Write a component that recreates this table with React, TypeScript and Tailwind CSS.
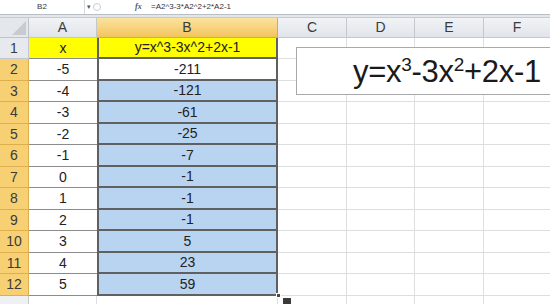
import React from "react";

type Row = { n: number; a: string; b: string; h: string };

const rows: Row[] = [
  { n: 2, a: "-5", b: "-211", h: "h-[22px]" },
  { n: 3, a: "-4", b: "-121", h: "h-[21px]" },
  { n: 4, a: "-3", b: "-61", h: "h-[22px]" },
  { n: 5, a: "-2", b: "-25", h: "h-[21px]" },
  { n: 6, a: "-1", b: "-7", h: "h-[22px]" },
  { n: 7, a: "0", b: "-1", h: "h-[21px]" },
  { n: 8, a: "1", b: "-1", h: "h-[22px]" },
  { n: 9, a: "2", b: "-1", h: "h-[21px]" },
  { n: 10, a: "3", b: "5", h: "h-[22px]" },
  { n: 11, a: "4", b: "23", h: "h-[21px]" },
  { n: 12, a: "5", b: "59", h: "h-[22px]" },
];

const font = { fontFamily: '"Liberation Sans", Arial, sans-serif' };

function EmptyCells() {
  return (
    <>
      <div className="w-[69px] shrink-0 border-r border-b border-[#dcdedf] bg-white" />
      <div className="w-[68px] shrink-0 border-r border-b border-[#dcdedf] bg-white" />
      <div className="w-[69px] shrink-0 border-r border-b border-[#dcdedf] bg-white" />
      <div className="flex-1 border-b border-[#dcdedf] bg-white" />
    </>
  );
}

export default function App() {
  return (
    <div
      className="relative w-[550px] h-[304px] overflow-hidden bg-white text-[#222]"
      style={font}
    >
      {/* formula bar */}
      <div className="flex h-[15px] items-center bg-white border-b border-[#b9bec5] text-[8px] text-[#333]">
        <div className="w-[85px] h-full flex items-center justify-center border-r border-[#d5d9de]">
          B2
        </div>
        <div className="w-[8px] flex items-center justify-center text-[7px] text-[#555]">▾</div>
        <div className="w-[10px] h-full flex items-center">
          <div className="w-[8px] h-[8px] rounded-full border border-[#c9cdd2]" />
        </div>
        <div className="w-[32px]" />
        <div className="w-[16px] italic font-bold text-[8px] text-[#555]" style={{ fontFamily: '"Liberation Serif", serif' }}>
          fx
        </div>
        <div>=A2^3-3*A2^2+2*A2-1</div>
      </div>
      <div className="h-[3px] bg-[#e3e7ec] border-b border-[#c6cbd1]" />

      {/* column headers */}
      <div className="flex h-[20px] text-[14px] text-[#3b3b3b]">
        <div className="relative w-[29px] shrink-0 bg-[#e4e8ed] border-r border-b border-[#bfc4ca] overflow-hidden">
          <div className="absolute right-[2px] bottom-[2px] w-0 h-0 border-l-[14px] border-l-transparent border-b-[14px] border-b-[#c8ccd1]" />
        </div>
        <div className="w-[68px] shrink-0 flex items-center justify-center bg-gradient-to-b from-[#f1f3f6] to-[#e1e5ea] border-r border-b border-[#c3c8ce]">
          A
        </div>
        <div className="w-[181px] shrink-0 flex items-center justify-center bg-gradient-to-b from-[#fbe39e] to-[#f3c45c] border-r border-b border-[#d9a94a]">
          B
        </div>
        <div className="w-[69px] shrink-0 flex items-center justify-center bg-gradient-to-b from-[#f1f3f6] to-[#e1e5ea] border-r border-b border-[#c3c8ce]">
          C
        </div>
        <div className="w-[68px] shrink-0 flex items-center justify-center bg-gradient-to-b from-[#f1f3f6] to-[#e1e5ea] border-r border-b border-[#c3c8ce]">
          D
        </div>
        <div className="w-[69px] shrink-0 flex items-center justify-center bg-gradient-to-b from-[#f1f3f6] to-[#e1e5ea] border-r border-b border-[#c3c8ce]">
          E
        </div>
        <div className="flex-1 flex items-center justify-center bg-gradient-to-b from-[#f1f3f6] to-[#e1e5ea] border-b border-[#c3c8ce]">
          F
        </div>
      </div>

      {/* row 1 */}
      <div className="flex h-[21px] text-[14px]">
        <div className="w-[29px] shrink-0 flex items-center justify-center bg-[#e6e9ee] border-r border-b border-[#c3c8ce] text-[#3b3b3b]">
          1
        </div>
        <div className="w-[68px] shrink-0 flex items-center justify-center bg-[#ffff00] border-b border-[#8c8c8c]">
          x
        </div>
        <div className="w-[181px] shrink-0 flex items-center justify-center bg-[#ffff00] border-l-2 border-r-2 border-b-2 border-[#606060]">
          y=x^3-3x^2+2x-1
        </div>
        <EmptyCells />
      </div>

      {rows.map((r) => (
        <div key={r.n} className={`flex ${r.h} text-[14px]`}>
          <div className="w-[29px] shrink-0 flex items-center justify-center bg-[#f6d072] border-r border-b border-[#dfae4c] text-[#3b3b3b]">
            {r.n}
          </div>
          <div className="w-[68px] shrink-0 flex items-center justify-center bg-white border-b border-[#8c8c8c]">
            {r.a}
          </div>
          <div
            className={
              r.n === 2
                ? "w-[181px] shrink-0 flex items-center justify-center bg-white border-l-2 border-r-2 border-b-2 border-[#606060]"
                : "w-[181px] shrink-0 flex items-center justify-center bg-[#b9d4f1] border-l-2 border-r-2 border-b-2 border-[#606060]"
            }
          >
            {r.b}
          </div>
          <EmptyCells />
        </div>
      ))}

      {/* row 13 (partial) */}
      <div className="flex h-[21px] text-[14px]">
        <div className="w-[29px] shrink-0 flex items-start justify-center pt-[3px] bg-[#eef0f3] border-r border-b border-[#c3c8ce] text-[#3b3b3b]">
          13
        </div>
        <div className="w-[68px] shrink-0 border-r border-b border-[#dcdedf] bg-white" />
        <div className="w-[181px] shrink-0 border-r border-b border-[#dcdedf] bg-white" />
        <EmptyCells />
      </div>

      {/* floating text box */}
      <div className="absolute left-[296px] top-[47px] w-[256px] h-[48px] bg-white border border-[#a9a9a9] flex items-center pl-[56px]">
        <span className="text-[31px] leading-none text-[#1a1a1a] whitespace-nowrap tracking-[-0.3px]">
          y=x<sup className="text-[19px] top-[-11px]">3</sup>-3x<sup className="text-[19px] top-[-11px]">2</sup>+2x-1
        </span>
      </div>

      {/* fill handle & paste options */}
      <div className="absolute left-[276px] top-[293px] w-[5px] h-[5px] bg-[#4a4a4a] border border-white" />
      <div className="absolute left-[283px] top-[298px] w-[8px] h-[6px] bg-[#3a3a3a]" />
    </div>
  );
}
